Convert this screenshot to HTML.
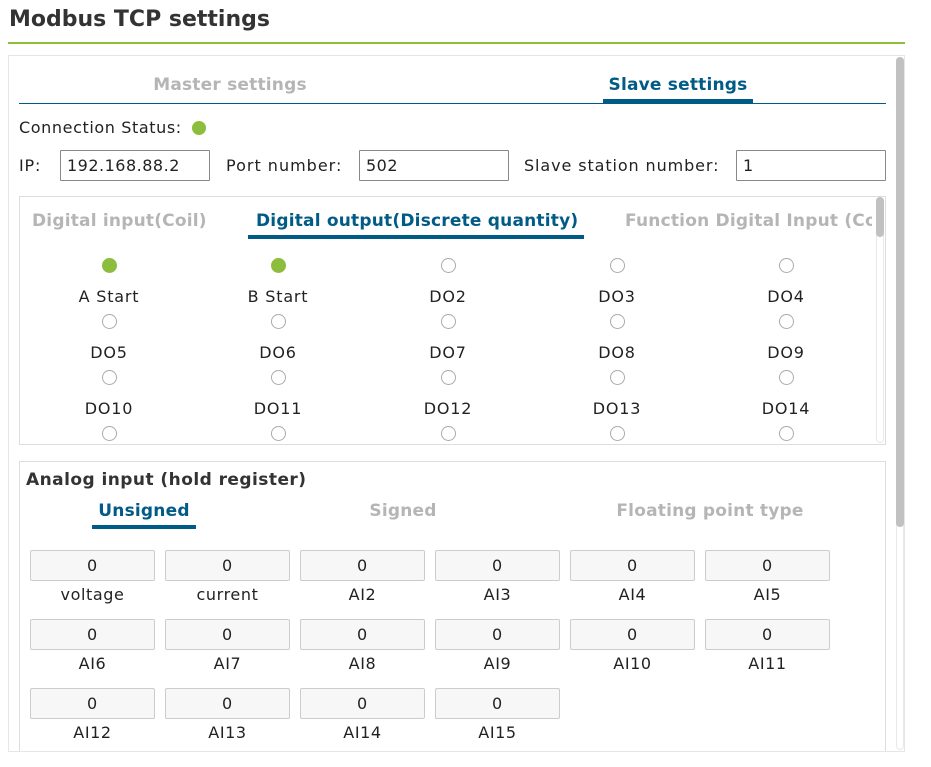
<!DOCTYPE html>
<html><head><meta charset="utf-8">
<style>
*{box-sizing:border-box;margin:0;padding:0}
body{width:931px;height:767px;background:#fff;font-family:"DejaVu Sans","Liberation Sans",sans-serif;color:#222;position:relative;overflow:hidden;font-size:16px;letter-spacing:0.8px}
.a{position:absolute;white-space:nowrap}
.b{font-weight:bold;letter-spacing:0.2px}
.gray{color:#b5b5b5}
.blue{color:#005b87}
.inp{position:absolute;border:1px solid #888;height:31px;background:#fff;padding-left:6px;line-height:30px;font-size:16px;border-radius:1px;letter-spacing:0.5px}
.lbl{position:absolute;width:140px;margin-left:-70px;text-align:center;font-size:16px;line-height:20px}
.r{position:absolute;width:15px;height:15px;margin-left:-7.5px;margin-top:-7.5px;border:1px solid #aaa;border-radius:50%;background:#fff}
.r.on{background:#8cbd3c;border-color:#8cbd3c}
.bx{position:absolute;width:125px;height:31px;border:1px solid #ccc;background:#f7f7f7;border-radius:2px;text-align:center;line-height:30px;font-size:16px}
.al{position:absolute;width:125px;text-align:center;font-size:16px;line-height:20px;letter-spacing:0.6px}
</style></head><body>
<div class="a b" style="left:9px;top:5px;font-size:22px;line-height:30px;color:#333;letter-spacing:0">Modbus TCP settings</div>
<div class="a" style="left:8px;top:42px;width:897px;height:2px;background:#8dbf3c"></div>

<div class="a" style="left:8px;top:55px;width:897px;height:697px;border:1px solid #e6e6e6"></div>
<div class="a" style="left:896px;top:57px;width:8px;height:693px;border:1px solid #e8e8e8;border-radius:4px"></div>
<div class="a" style="left:896px;top:57px;width:8px;height:470px;background:#c1c1c1;border-radius:4px"></div>

<div class="a b gray" style="left:130px;top:74px;width:200px;text-align:center;font-size:17px;line-height:22px">Master settings</div>
<div class="a b blue" style="left:578px;top:74px;width:200px;text-align:center;font-size:17px;line-height:22px">Slave settings</div>
<div class="a" style="left:603px;top:99px;width:150px;height:4px;background:#005b87"></div>
<div class="a" style="left:19px;top:103px;width:867px;height:1px;background:#005b87"></div>

<div class="a" style="left:19px;top:118px;line-height:20px;letter-spacing:0.6px">Connection Status:</div>
<div class="a" style="left:192px;top:121px;width:14px;height:14px;border-radius:50%;background:#8cbd3c"></div>

<div class="a" style="left:19px;top:156px;line-height:20px">IP:</div>
<div class="inp" style="left:60px;top:150px;width:150px">192.168.88.2</div>
<div class="a" style="left:226px;top:156px;line-height:20px;letter-spacing:1px">Port number:</div>
<div class="inp" style="left:359px;top:150px;width:150px">502</div>
<div class="a" style="left:524px;top:156px;line-height:20px;letter-spacing:0.9px">Slave station number:</div>
<div class="inp" style="left:736px;top:150px;width:150px">1</div>

<div class="a" style="left:19px;top:196px;width:867px;height:249px;border:1px solid #ddd"></div>
<div class="a" style="left:876px;top:197px;width:8px;height:246px;border:1px solid #e8e8e8;border-radius:4px"></div>
<div class="a" style="left:876px;top:197px;width:8px;height:40px;background:#c1c1c1;border-radius:4px"></div>
<div class="a b gray" style="left:32px;top:210px;font-size:17px;line-height:22px">Digital input(Coil)</div>
<div class="a b blue" style="left:256px;top:210px;font-size:17px;line-height:22px">Digital output(Discrete quantity)</div>
<div class="a" style="left:248px;top:235px;width:336px;height:4px;background:#005b87"></div>
<div class="a" style="left:625px;top:210px;width:247px;overflow:hidden"><div class="b gray" style="font-size:17px;line-height:22px;white-space:nowrap">Function Digital Input (Coil)</div></div>

<div class="r on" style="left:109px;top:265px"></div><div class="r on" style="left:278px;top:265px"></div><div class="r" style="left:448px;top:265px"></div><div class="r" style="left:617px;top:265px"></div><div class="r" style="left:786px;top:265px"></div>
<div class="lbl" style="left:109px;top:287px">A Start</div><div class="lbl" style="left:278px;top:287px">B Start</div><div class="lbl" style="left:448px;top:287px">DO2</div><div class="lbl" style="left:617px;top:287px">DO3</div><div class="lbl" style="left:786px;top:287px">DO4</div>
<div class="r" style="left:109px;top:321px"></div><div class="r" style="left:278px;top:321px"></div><div class="r" style="left:448px;top:321px"></div><div class="r" style="left:617px;top:321px"></div><div class="r" style="left:786px;top:321px"></div>
<div class="lbl" style="left:109px;top:343px">DO5</div><div class="lbl" style="left:278px;top:343px">DO6</div><div class="lbl" style="left:448px;top:343px">DO7</div><div class="lbl" style="left:617px;top:343px">DO8</div><div class="lbl" style="left:786px;top:343px">DO9</div>
<div class="r" style="left:109px;top:377px"></div><div class="r" style="left:278px;top:377px"></div><div class="r" style="left:448px;top:377px"></div><div class="r" style="left:617px;top:377px"></div><div class="r" style="left:786px;top:377px"></div>
<div class="lbl" style="left:109px;top:399px">DO10</div><div class="lbl" style="left:278px;top:399px">DO11</div><div class="lbl" style="left:448px;top:399px">DO12</div><div class="lbl" style="left:617px;top:399px">DO13</div><div class="lbl" style="left:786px;top:399px">DO14</div>
<div class="r" style="left:109px;top:433px"></div><div class="r" style="left:278px;top:433px"></div><div class="r" style="left:448px;top:433px"></div><div class="r" style="left:617px;top:433px"></div><div class="r" style="left:786px;top:433px"></div>
<div class="a" style="left:20px;top:444px;width:865px;height:1px;background:#ddd"></div>

<div class="a" style="left:19px;top:461px;width:867px;height:300px;border:1px solid #ddd"></div>
<div class="a b" style="left:26px;top:469px;font-size:17px;line-height:22px;color:#333;letter-spacing:0.45px">Analog input (hold register)</div>
<div class="a b blue" style="left:64px;top:500px;width:160px;text-align:center;font-size:17px;line-height:22px">Unsigned</div>
<div class="a" style="left:92px;top:525px;width:104px;height:4px;background:#005b87"></div>
<div class="a b gray" style="left:323px;top:500px;width:160px;text-align:center;font-size:17px;line-height:22px">Signed</div>
<div class="a b gray" style="left:590px;top:500px;width:240px;text-align:center;font-size:17px;line-height:22px">Floating point type</div>

<div class="bx" style="left:30px;top:550px">0</div><div class="bx" style="left:165px;top:550px">0</div><div class="bx" style="left:300px;top:550px">0</div><div class="bx" style="left:435px;top:550px">0</div><div class="bx" style="left:570px;top:550px">0</div><div class="bx" style="left:705px;top:550px">0</div>
<div class="al" style="left:30px;top:585px">voltage</div><div class="al" style="left:165px;top:585px">current</div><div class="al" style="left:300px;top:585px">AI2</div><div class="al" style="left:435px;top:585px">AI3</div><div class="al" style="left:570px;top:585px">AI4</div><div class="al" style="left:705px;top:585px">AI5</div>
<div class="bx" style="left:30px;top:619px">0</div><div class="bx" style="left:165px;top:619px">0</div><div class="bx" style="left:300px;top:619px">0</div><div class="bx" style="left:435px;top:619px">0</div><div class="bx" style="left:570px;top:619px">0</div><div class="bx" style="left:705px;top:619px">0</div>
<div class="al" style="left:30px;top:654px">AI6</div><div class="al" style="left:165px;top:654px">AI7</div><div class="al" style="left:300px;top:654px">AI8</div><div class="al" style="left:435px;top:654px">AI9</div><div class="al" style="left:570px;top:654px">AI10</div><div class="al" style="left:705px;top:654px">AI11</div>
<div class="bx" style="left:30px;top:688px">0</div><div class="bx" style="left:165px;top:688px">0</div><div class="bx" style="left:300px;top:688px">0</div><div class="bx" style="left:435px;top:688px">0</div>
<div class="al" style="left:30px;top:723px">AI12</div><div class="al" style="left:165px;top:723px">AI13</div><div class="al" style="left:300px;top:723px">AI14</div><div class="al" style="left:435px;top:723px">AI15</div>

<div class="a" style="left:0;top:752px;width:931px;height:15px;background:#fff"></div>
<div class="a" style="left:8px;top:751px;width:897px;height:1px;background:#e6e6e6"></div>
</body></html>
